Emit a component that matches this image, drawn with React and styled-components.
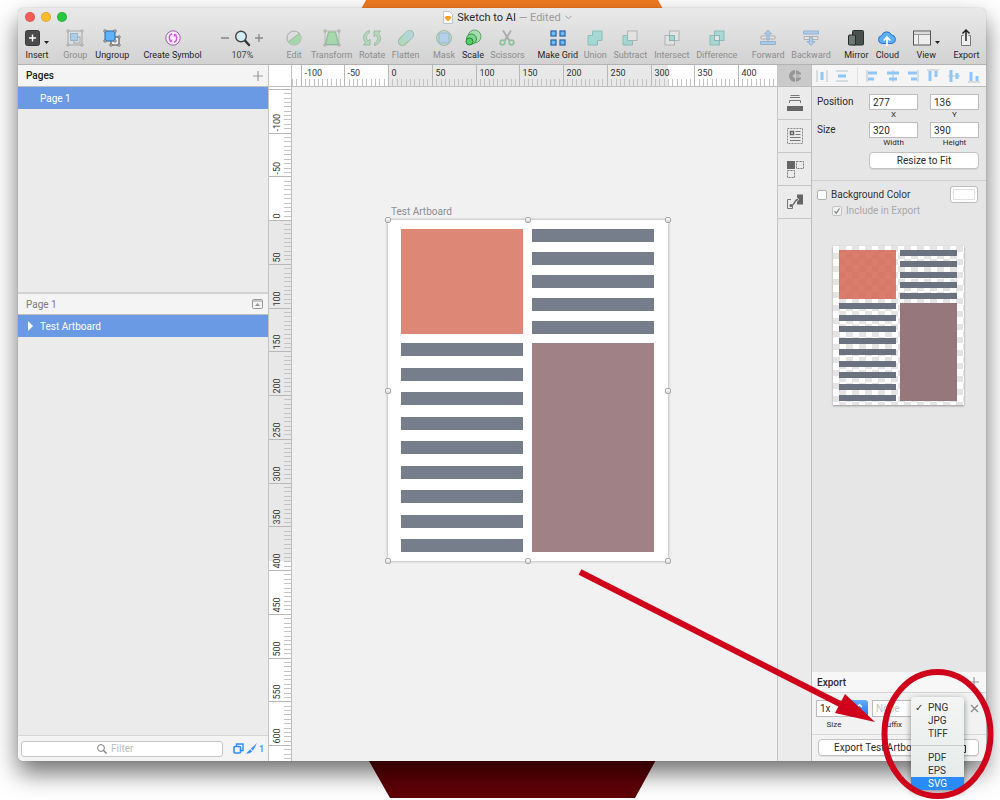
import React, { useLayoutEffect, useRef, useState } from 'react';
import styled, { createGlobalStyle, css } from 'styled-components';

const GlobalStyle = createGlobalStyle`
  * { box-sizing: border-box; }
  body { margin: 0; background: #fff; font-family: Roboto, "Liberation Sans", sans-serif; font-size: 10px; color: #2b2b2b; }
  button, input, select { font: inherit; color: inherit; margin: 0; }
  svg { display: block; flex: none; }
`;

/* ---------- desktop ---------- */

const Desktop = styled.div`
  position: relative;
  display: flex;
  flex-direction: column;
  min-height: 100vh;
  padding: 8px 14px 39px 18px;
  overflow: hidden;
`;

const WallpaperTop = styled.svg`
  position: absolute;
  top: 0;
  left: 0;
  width: 100%;
  height: 40px;
`;

const WallpaperBottom = styled.svg`
  position: absolute;
  bottom: 2px;
  left: 0;
  width: 100%;
  height: 60px;
`;

const Annotation = styled.svg`
  position: absolute;
  right: 0;
  bottom: 0;
  z-index: 5;
  pointer-events: none;
`;

const Window = styled.main`
  position: relative;
  flex: 1;
  display: flex;
  flex-direction: column;
  border-radius: 5px;
  background: #ebebeb;
  box-shadow: 0 12px 24px rgba(0, 0, 0, 0.56), 0 0 1px rgba(0, 0, 0, 0.4);
`;

/* ---------- title bar and toolbar ---------- */

const Header = styled.header`
  height: 57px;
  background: linear-gradient(#e9e9e9, #d2d2d2);
  border-bottom: 1px solid #b2b2b2;
  border-radius: 5px 5px 0 0;
`;

const TitleBar = styled.div`
  display: grid;
  grid-template-columns: 1fr auto 1fr;
  align-items: center;
  height: 18px;
  padding-left: 7px;
`;

const Lights = styled.div`
  display: flex;
  gap: 6px;
`;

const Light = styled.button`
  width: 10px;
  height: 10px;
  padding: 0;
  border: 1px solid rgba(0, 0, 0, 0.1);
  border-radius: 50%;
  background: ${(p) => p.$color};
`;

const Title = styled.h1`
  display: flex;
  align-items: center;
  gap: 4px;
  margin: 0;
  padding-left: 4px;
  font-size: 11px;
  font-weight: 400;
  white-space: nowrap;
`;

const Muted = styled.span`
  color: #9b9b9b;
`;

const Toolbar = styled.nav`
  display: flex;
  justify-content: space-between;
  padding: 2px 6px 0 7px;
`;

const ToolGroup = styled.div`
  display: flex;
  gap: ${(p) => (p.$tight ? 6 : 7)}px;
`;

const ToolButton = styled.button`
  display: flex;
  flex-direction: column;
  align-items: center;
  gap: 3px;
  width: ${(p) => p.$w}px;
  padding: 0;
  border: 0;
  background: none;
  font-size: 9px;
  line-height: 10px;
  white-space: nowrap;
  color: #262626;
  &:disabled { color: #8c8c8c; }
  &:disabled svg { opacity: 0.5; }
`;

const IconRow = styled.span`
  display: flex;
  align-items: center;
  justify-content: center;
  gap: 4px;
  height: 19px;
`;

const ZoomTool = styled.div`
  display: flex;
  flex-direction: column;
  align-items: center;
  gap: 3px;
  width: 48px;
  margin: 0 4px 0 3px;
  font-size: 9px;
  line-height: 10px;
  color: #444;
`;

const BareButton = styled.button`
  display: flex;
  padding: 0;
  border: 0;
  background: none;
`;

/* ---------- body ---------- */

const Body = styled.div`
  flex: 1;
  display: flex;
  min-height: 0;
`;

const Sidebar = styled.aside`
  display: flex;
  flex-direction: column;
  width: 251px;
  border-right: 1px solid #c4c4c4;
  border-radius: 0 0 0 5px;
  overflow: hidden;
`;

const PagesPane = styled.section`
  height: 229px;
  border-bottom: 2px solid #d2d2d2;
`;

const LayersPane = styled.section`
  flex: 1;
`;

const PaneHead = styled.h2`
  display: flex;
  align-items: center;
  justify-content: space-between;
  height: ${(p) => p.$h}px;
  margin: 0;
  padding: 0 5px 0 8px;
  background: #f4f4f4;
  border-bottom: 1px solid #bdbdbd;
  font-size: 10px;
  font-weight: ${(p) => (p.$muted ? 400 : 500)};
  color: ${(p) => (p.$muted ? '#7b7b7b' : '#222')};
`;

const SelectedRow = styled.button`
  display: flex;
  align-items: center;
  gap: 7px;
  width: 100%;
  height: 22px;
  padding: 0 0 0 ${(p) => p.$indent}px;
  border: 0;
  background: #6a9ae4;
  color: #fff;
  text-align: left;
`;

const FilterBar = styled.div`
  display: flex;
  align-items: center;
  gap: 10px;
  height: 26px;
  padding: 0 4px 0 3px;
  border-top: 1px solid #d6d6d6;
  background: #f4f4f4;
`;

const FilterField = styled.label`
  flex: 1;
  display: flex;
  align-items: center;
  gap: 4px;
  min-width: 0;
  height: 16px;
  padding-left: 75px;
  border: 1px solid #c6c6c6;
  border-radius: 3px;
  background: #fff;
`;

const FilterInput = styled.input`
  flex: 1;
  width: 0;
  min-width: 0;
  height: 14px;
  padding: 0;
  border: 0;
  outline: 0;
  background: none;
  &::placeholder { color: #bdbdbd; opacity: 1; }
`;

const FilterTools = styled.div`
  flex: none;
  display: flex;
  align-items: center;
  gap: 2px;
  color: #2f8cff;
  font-size: 9px;
  font-weight: 500;
`;

const Stage = styled.section`
  flex: 1;
  display: flex;
  flex-direction: column;
  min-width: 0;
`;

const TopRulerBox = styled.div`
  height: 22px;
  border-bottom: 1px solid #bdbdbd;
  background: #fff;
  overflow: hidden;
`;

const TopRulerScale = styled.svg`
  width: 100%;
  height: 21px;
`;

const StageRow = styled.div`
  flex: 1;
  display: flex;
  min-height: 0;
`;

const LeftRulerBox = styled.div`
  position: relative;
  width: 23px;
  border-right: 1px solid #bdbdbd;
  background: #fff;
  overflow: hidden;
`;

const LeftRulerScale = styled.svg`
  position: absolute;
  inset: 0;
  width: 100%;
  height: 100%;
`;

const Canvas = styled.div`
  position: relative;
  flex: 1;
  background: #f1f1f1;
`;

const ArtboardFrame = styled.figure`
  position: absolute;
  left: 96px;
  top: 133px;
  width: 280px;
  height: 341px;
  margin: 0;
  background: #fff;
  box-shadow: 0 0 0 1px #d2d2d2, 0 0 3px rgba(0, 0, 0, 0.35);
`;

const ArtboardName = styled.figcaption`
  position: absolute;
  left: 3px;
  top: -15px;
  line-height: 14px;
  color: #8d8d8d;
`;

const Handle = styled.i`
  position: absolute;
  left: ${(p) => p.$x};
  top: ${(p) => p.$y};
  width: 6px;
  height: 6px;
  margin: -3px;
  border: 1px solid #a9a9a9;
  border-radius: 2px;
  background: linear-gradient(#fff, #d8d8d8);
`;

/* ---------- the poster, on the canvas and in the preview ---------- */

const Poster = styled.div`
  display: grid;
  grid-template-columns: ${(p) => (p.$small ? '57px 57px' : '122px 122px')};
  gap: ${(p) => (p.$small ? 4 : 9)}px;
  height: 100%;
  padding: ${(p) => (p.$small ? '4px 6px' : '9px 13px')};
`;

const PosterColumn = styled.div`
  display: grid;
  grid-template-rows: ${(p) => (p.$small ? '49px 1fr' : '105px 1fr')};
  gap: ${(p) => (p.$small ? 4 : 9)}px;
`;

const Block = styled.div`
  background: ${(p) => p.$color};
`;

const BarStack = styled.div`
  display: flex;
  flex-direction: column;
  justify-content: space-between;
`;

const Bar = styled.div`
  height: ${(p) => (p.$small ? 6 : 13)}px;
  background: ${(p) => (p.$small ? '#6b7280' : '#767e8b')};
`;

const Preview = styled.div`
  width: 131px;
  height: 159px;
  margin: 27px 0 0 21px;
  background: repeating-conic-gradient(#e4e4e4 0 25%, #fff 0 50%) 0 0 / 13px 13px;
  box-shadow: 0 1px 2px rgba(0, 0, 0, 0.35);
`;

/* ---------- plug-in strip ---------- */

const Strip = styled.nav`
  display: flex;
  flex-direction: column;
  width: 35px;
  border-left: 1px solid #c6c6c6;
  border-right: 1px solid #bdbdbd;
  background: #ebebeb;
`;

const StripHead = styled.button`
  display: flex;
  align-items: center;
  justify-content: center;
  height: 22px;
  padding: 0;
  border: 0;
  border-bottom: 1px solid #bdbdbd;
  background: #cacaca;
`;

const StripButton = styled.button`
  display: flex;
  align-items: center;
  justify-content: center;
  height: 33px;
  padding: 0;
  border: 0;
  border-bottom: 1px solid #c6c6c6;
  background: none;
`;

/* ---------- inspector ---------- */

const Inspector = styled.aside`
  display: flex;
  flex-direction: column;
  width: 174px;
  background: #e6e6e6;
  border-radius: 0 0 5px 0;
`;

const AlignBar = styled.div`
  display: flex;
  align-items: center;
  justify-content: space-between;
  height: 22px;
  padding: 0 6px 0 4px;
  border-bottom: 1px solid #bdbdbd;
  background: #f5f5f5;
`;

const AlignDivider = styled.i`
  width: 1px;
  height: 18px;
  background: #e0e0e0;
`;

const Geometry = styled.div`
  display: grid;
  grid-template-columns: 1fr 49px 49px;
  gap: 3px 12px;
  padding: 7px 7px 11px 5px;
  border-bottom: 1px solid #cfcfcf;
`;

const GeometryName = styled.span`
  line-height: 16px;
`;

const Field = styled.label`
  display: flex;
  flex-direction: column;
  align-items: center;
  font-size: 8px;
  line-height: 9px;
`;

const inputBox = css`
  height: 16px;
  border: 1px solid #bdbdbd;
  border-radius: 0;
  background: #fff;
  font-size: 10px;
  outline: 0;
`;

const FieldInput = styled.input`
  ${inputBox}
  width: 100%;
  padding: 0 3px;
`;

const PushButton = styled.button`
  height: 17px;
  padding: 0;
  border: 1px solid #c2c2c2;
  border-radius: 4px;
  background: #fff;
  box-shadow: 0 1px 0 rgba(0, 0, 0, 0.08);
`;

const ResizeButton = styled(PushButton)`
  grid-column: 2 / 4;
  margin-top: 2px;
`;

const Options = styled.div`
  padding: 5px 8px 1px 5px;
`;

const OptionRow = styled.div`
  display: flex;
  align-items: center;
  justify-content: space-between;
  height: ${(p) => p.$h}px;
  padding-left: ${(p) => p.$indent || 0}px;
`;

const Check = styled.label`
  display: flex;
  align-items: center;
  gap: 4px;
  color: ${(p) => (p.$off ? '#a8a8a8' : '#333')};
`;

const CheckInput = styled.input`
  appearance: none;
  width: 10px;
  height: 10px;
  border: 1px solid #b0b0b0;
  border-radius: 2px;
  background: #fff;
  &:checked {
    border-color: #c4c4c4;
    background: #f0f0f0 url("data:image/svg+xml,%3Csvg xmlns='http://www.w3.org/2000/svg' viewBox='0 0 8 8'%3E%3Cpath d='M1.5 4.2 3.3 6.2 6.5 1.5' fill='none' stroke='%23888' stroke-width='1.3'/%3E%3C/svg%3E") center / 8px 8px no-repeat;
  }
`;

const Swatch = styled.button`
  width: 28px;
  height: 17px;
  padding: 0;
  border: 1px solid #bdbdbd;
  border-radius: 3px;
  background: #fff;
  box-shadow: inset 0 0 0 2px #fff, inset 0 0 0 3px #e2e2e2;
`;

const ExportPane = styled.section`
  margin-top: auto;
  background: #f2f2f2;
  border-radius: 0 0 5px 0;
`;

const ExportHead = styled.h2`
  display: flex;
  align-items: center;
  justify-content: space-between;
  height: 21px;
  margin: 0;
  padding: 0 7px 0 5px;
  border-bottom: 1px solid #d4d4d4;
  background: #f7f7f7;
  font-size: 10px;
  font-weight: 500;
`;

const ExportRow = styled.div`
  display: grid;
  grid-template-columns: 52px 40px 46px 1fr;
  gap: 4px;
  align-items: start;
  height: 42px;
  padding: 7px 5px 0 4px;
  border-bottom: 1px solid #d8d8d8;
`;

const ExportField = styled.div`
  position: relative;
  display: flex;
  flex-direction: column;
  gap: 3px;
`;

const FieldName = styled.label`
  padding-right: ${(p) => p.$cap || 0}px;
  font-size: 8px;
  line-height: 9px;
  text-align: center;
`;

const SelectShell = styled.span`
  display: flex;
  height: 17px;
`;

const ExportSelect = styled.select`
  ${inputBox}
  appearance: none;
  flex: 1;
  min-width: 0;
  height: 17px;
  padding: 0 3px;
`;

const SelectCap = styled.span`
  display: flex;
  align-items: center;
  justify-content: center;
  width: 17px;
  border-radius: 0 3px 3px 0;
  background: linear-gradient(#62adfb, #1a6ff0);
`;

const SuffixInput = styled.input`
  ${inputBox}
  width: 100%;
  height: 17px;
  padding: 0 3px;
  &::placeholder { color: #c4c4c4; opacity: 1; }
`;

const ExportActions = styled.div`
  position: relative;
  display: flex;
  height: 26px;
  padding: 4px 7px 5px 6px;
`;

const ExportButton = styled(PushButton)`
  flex: 1;
  display: flex;
  align-items: center;
  justify-content: space-between;
  padding: 0 11px 0 15px;
`;

const RemoveButton = styled(BareButton)`
  justify-content: flex-end;
`;

const Menu = styled.div`
  position: absolute;
  z-index: 2;
  top: -3px;
  left: -5px;
  display: flex;
  flex-direction: column;
  width: 53px;
  height: 93px;
  padding: 4px 0 0;
  border-radius: 4px;
  background: linear-gradient(#f3f5f4, #e4eae9);
  box-shadow: 0 2px 6px rgba(0, 0, 0, 0.45);
`;

const MenuItem = styled.button`
  display: flex;
  align-items: center;
  gap: 5px;
  height: 13px;
  padding: 0 0 0 4px;
  border: 0;
  background: ${(p) => (p.$active ? '#2a8bfb' : 'none')};
  color: ${(p) => (p.$active ? '#fff' : '#333')};
  font-size: 10px;
  line-height: 13px;
  text-align: left;
`;

const Tick = styled.span`
  width: 8px;
  font-family: "DejaVu Sans", sans-serif;
  font-size: 10px;
  font-weight: 700;
`;

const MenuRule = styled.hr`
  width: 100%;
  margin: 5px 0;
  border: 0;
  border-top: 1px solid #c9cdcc;
`;

/* ---------- icons ---------- */

const Svg = ({ w = 18, h = 18, children, ...rest }) => (
  <svg width={w} height={h} viewBox={`0 0 ${w} ${h}`} fill="none" aria-hidden="true" {...rest}>
    {children}
  </svg>
);

const Caret = () => (
  <svg width="5" height="16" viewBox="0 0 5 16" aria-hidden="true">
    <path d="M0 11h5L2.500 14z" fill="#222" />
  </svg>
);

const Corners = ({ x, y, s }) => (
  <g fill="#eee" stroke="#555" strokeWidth=".8">
    {[[0, 0], [1, 0], [0, 1], [1, 1]].map(([a, b]) => (
      <circle key={`${a}${b}`} cx={x + a * s} cy={y + b * s} r="1.2" />
    ))}
  </g>
);

const icons = {
  Insert: (
    <>
      <Svg w={15} h={16}>
        <rect x=".5" y=".5" width="14" height="15" rx="2" fill="#4c4c4c" stroke="#3a3a3a" />
        <path d="M7.500 4.500v7M4 8h7" stroke="#fff" strokeWidth="1.400" />
      </Svg>
      <Caret />
    </>
  ),
  Group: (
    <Svg>
      <rect x="2" y="2" width="14" height="14" stroke="#777" />
      <rect x="8" y="8" width="6" height="6" fill="#ddd" stroke="#777" />
      <rect x="4.500" y="4.500" width="7" height="7" fill="#79bdf0" stroke="#4a90c8" />
      <Corners x={2} y={2} s={14} />
    </Svg>
  ),
  Ungroup: (
    <Svg>
      <rect x="8" y="8" width="8" height="8" fill="#eee" stroke="#444" />
      <Corners x={8} y={8} s={8} />
      <rect x="2" y="2" width="10" height="10" fill="#5fb2fa" stroke="#2468a8" />
      <Corners x={2} y={2} s={10} />
    </Svg>
  ),
  'Create Symbol': (
    <Svg>
      <circle cx="9" cy="9" r="7.200" fill="#f8eefa" stroke="#a05cb0" />
      <path d="M8 4.800C5 5.500 4.500 9.500 6.500 12M10 13.200c3-.7 3.500-4.700 1.500-7.200" stroke="#d455e8" strokeWidth="1.500" />
      <path d="M5 13h3.200V10zM13 5H9.800v3z" fill="#d455e8" />
    </Svg>
  ),
  Edit: (
    <Svg>
      <circle cx="9" cy="9" r="7" fill="#ddd" stroke="#777" />
      <path d="M14.500 4.500A7 7 0 1 1 3 13z" fill="#72d27d" />
      <path d="M3 13 15 4" stroke="#4b9a58" />
    </Svg>
  ),
  Transform: (
    <Svg>
      <path d="M2 2h14v14H2z" stroke="#999" />
      <path d="M5.500 3h7L15.500 15.500h-13z" fill="#72d27d" stroke="#3f9a50" strokeWidth="1.200" />
      <Corners x={2} y={2} s={14} />
    </Svg>
  ),
  Rotate: (
    <Svg w={20}>
      <path d="M7.500 1.500C1 3 0 10 3.500 13.500L1.500 16H8V10L6 12C3.500 9.500 4 5.500 7.500 4zM12.500 16.500c6.500-1.500 7.500-8.500 4-12L18.500 2H12v6l2-2c2.500 2.500 2 6.500-1.500 8z" fill="#86d996" stroke="#5f8f68" strokeWidth=".9" />
    </Svg>
  ),
  Flatten: (
    <Svg>
      <rect x="0" y="5" width="18" height="8" rx="4" transform="rotate(-45 9 9)" fill="#8ad8a0" stroke="#4a9a6a" />
      <path d="M5.500 6.500 9 3a4 4 0 0 1 6 6L12 12z" fill="#8fcbe8" opacity=".7" />
    </Svg>
  ),
  Mask: (
    <Svg>
      <circle cx="9" cy="9" r="7.500" fill="#9ddba8" stroke="#6a9a75" />
      <rect x="4" y="4" width="10" height="10" rx="1" fill="#8cc4f5" stroke="#5b8fc0" />
    </Svg>
  ),
  Scale: (
    <Svg>
      <circle cx="10.500" cy="7.500" r="6.500" fill="#a9dcae" stroke="#62a56a" />
      <circle cx="7.500" cy="10" r="5" fill="#7fd48a" stroke="#379746" />
      <circle cx="5.500" cy="12.500" r="3.500" fill="#55cf66" stroke="#1d8a30" />
    </Svg>
  ),
  Scissors: (
    <Svg>
      <path d="M5 1.500 11.500 12M13 1.500 6.500 12" stroke="#777" strokeWidth="1.800" />
      <circle cx="4.500" cy="13.500" r="2.300" stroke="#4cab5c" strokeWidth="1.800" />
      <circle cx="13.500" cy="13.500" r="2.300" stroke="#4cab5c" strokeWidth="1.800" />
    </Svg>
  ),
  'Make Grid': (
    <Svg w={16} h={16}>
      {[[1, 1], [10, 1], [1, 10], [10, 10]].map(([x, y]) => (
        <rect key={`${x}-${y}`} x={x} y={y} width="5" height="5" fill="#6cbcfc" stroke="#2a5fa8" strokeWidth="1.200" />
      ))}
    </Svg>
  ),
  Union: (
    <Svg w={16} h={16}>
      <path d="M5.500 1h9.500v9.500h-4.500V15H1V5.500h4.500z" fill="#6fd4cc" stroke="#3f9f9a" />
    </Svg>
  ),
  Subtract: (
    <Svg w={16} h={16}>
      <rect x="5.500" y="1" width="9.500" height="9.500" fill="#e8e8e8" stroke="#888" />
      <path d="M1 5.500h4.500v5h5V15H1z" fill="#6fd4cc" stroke="#3f9f9a" />
    </Svg>
  ),
  Intersect: (
    <Svg w={16} h={16}>
      <rect x="5.500" y="1" width="9.500" height="9.500" fill="#e8e8e8" stroke="#888" />
      <rect x="1" y="5.500" width="9.500" height="9.500" fill="#e8e8e8" stroke="#888" />
      <rect x="5.500" y="5.500" width="5" height="5" fill="#6fd4cc" stroke="#2f8f8a" />
    </Svg>
  ),
  Difference: (
    <Svg w={16} h={16}>
      <rect x="5.500" y="1" width="9.500" height="9.500" fill="#6fd4cc" stroke="#3f9f9a" />
      <rect x="1" y="5.500" width="9.500" height="9.500" fill="#6fd4cc" stroke="#3f9f9a" />
      <rect x="5.500" y="5.500" width="5" height="5" fill="#eee" stroke="#2f8f8a" />
    </Svg>
  ),
  Forward: (
    <Svg>
      <path d="M2 7h14v3H2z" fill="#e8e8e8" stroke="#888" />
      <path d="M1.500 12.500h15v3h-15z" fill="#7cbcf5" stroke="#4a88c8" />
      <path d="M9 1 5.500 5H8v6h2V5h2.500z" fill="#7cbcf5" stroke="#4a88c8" />
    </Svg>
  ),
  Backward: (
    <Svg>
      <path d="M1.500 2h15v3h-15z" fill="#7cbcf5" stroke="#4a88c8" />
      <path d="M2 7.500h14v3H2z" fill="#e8e8e8" stroke="#888" />
      <path d="M9 16.500 5 12.500h2.500V8h3v4.500H13z" fill="#7cbcf5" stroke="#4a88c8" />
    </Svg>
  ),
  Mirror: (
    <Svg>
      <rect x="5.500" y="1.500" width="11" height="14.500" rx="1" fill="#47514d" stroke="#2b302e" />
      <rect x="1.500" y="6" width="7" height="10" rx="1" fill="#6d7a75" stroke="#242827" />
    </Svg>
  ),
  Cloud: (
    <Svg w={20}>
      <path d="M5 14.500a4 4 0 0 1-.3-7.900A5.200 5.200 0 0 1 14.500 6 4.300 4.300 0 0 1 15 14.500z" fill="#5aaefa" stroke="#2a76c8" />
      <path d="M10 17V9M6.800 11.500 10 8l3.200 3.500" stroke="#fff" strokeWidth="1.800" />
    </Svg>
  ),
  View: (
    <>
      <Svg>
        <rect x=".5" y="2" width="17" height="14" fill="#eee" stroke="#555" />
        <path d="M1 5.500h16M5.500 6v9.500" stroke="#999" />
        <path d="M1 4h16" stroke="#c8c8c8" />
      </Svg>
      <Caret />
    </>
  ),
  Export: (
    <Svg>
      <path d="M6.500 6.500H4.500V16.500h9V6.500h-2" fill="#eee" stroke="#777" />
      <path d="M9 12V1M5.500 4.500 9 1l3.500 3.500" stroke="#222" strokeWidth="1.500" />
    </Svg>
  ),
};

const PlusIcon = () => (
  <Svg w={10} h={10}><path d="M5 0v10M0 5h10" stroke="#999" strokeWidth="1.200" /></Svg>
);

const ArrowsIcon = () => (
  <Svg w={7} h={11}><path d="M1 4 3.500 1.500 6 4M1 7l2.500 2.500L6 7" stroke="#fff" strokeWidth="1.300" /></Svg>
);

const alignIcons = [
  ['Distribute horizontally', 'M1 1v12M11 1v12', 'M6 3v8'],
  ['Distribute vertically', 'M0 2h12M0 12h12', 'M2 7h8'],
  ['Align left', 'M1 1v12', 'M2 4h9M2 10h6'],
  ['Align centre', 'M6 1v12', 'M0 4h12M2 10h8'],
  ['Align right', 'M11 1v12', 'M1 4h9M4 10h6'],
  ['Align top', 'M0 1h12', 'M3 2v10M9 2v6'],
  ['Align middle', 'M0 7h12', 'M3 1v12M9 4v6'],
  ['Align bottom', 'M0 13h12', 'M3 3v9M9 7v5'],
];

/* ---------- toolbar data: label, column width, enabled ---------- */

const toolGroupsLeft = [
  [['Insert', 24, true]],
  [['Group', 25, false], ['Ungroup', 35, true]],
  [['Create Symbol', 58, true]],
];

const toolGroupsRight = [
  [['Edit', 20, false], ['Transform', 41, false], ['Rotate', 26, false], ['Flatten', 27, false]],
  [['Mask', 22, false], ['Scale', 22, true], ['Scissors', 33, false]],
  [['Make Grid', 40, true], ['Union', 23, false], ['Subtract', 35, false], ['Intersect', 36, false], ['Difference', 42, false]],
  [['Forward', 33, false], ['Backward', 39, false]],
  [['Mirror', 24, true], ['Cloud', 24, true]],
  [['View', 26, true]],
  [['Export', 27, true]],
];

const Tools = ({ groups }) =>
  groups.map((group) => (
    <ToolGroup key={group[0][0]} $tight={group.length > 4}>
      {group.map(([label, w, on]) => (
        <ToolButton key={label} type="button" $w={w} disabled={!on}>
          <IconRow>{icons[label]}</IconRow>
          {label}
        </ToolButton>
      ))}
    </ToolGroup>
  ));

/* ---------- rulers ---------- */

const UNIT = 0.875;
const steps = Array.from({ length: 800 }, (_, i) => (i - 40) * 5);

const useBoxSize = () => {
  const ref = useRef(null);
  const [size, setSize] = useState({ width: 0, height: 0 });
  useLayoutEffect(() => {
    const measure = () => setSize({ width: ref.current.clientWidth, height: ref.current.clientHeight });
    measure();
    window.addEventListener('resize', measure);
    return () => window.removeEventListener('resize', measure);
  }, []);
  return [ref, size];
};

const RulerTop = () => {
  const [ref, { width }] = useBoxSize();
  const origin = 119;
  const at = (v) => Math.round(origin + v * UNIT) + 0.5;
  const shown = steps.filter((v) => at(v) > 23 && at(v) < width);
  return (
    <TopRulerBox ref={ref}>
      <TopRulerScale role="img" aria-label="Horizontal ruler">
        <rect x={origin} y="0" width="280" height="21" fill="#e8e8e8" />
        <path d="M22.500 0V21" stroke="#c0c0c0" />
        {shown.map((v) => (
          <path key={v} d={`M${at(v)} ${v % 50 ? 14 : 0}V21`} stroke={v % 50 ? '#c4c4c4' : '#b8b8b8'} />
        ))}
        {shown.filter((v) => v % 50 === 0 && at(v) + 22 < width).map((v) => (
          <text key={v} x={at(v) + 3} y="11" fontSize="9" fill="#333">{v}</text>
        ))}
      </TopRulerScale>
    </TopRulerBox>
  );
};

const RulerLeft = () => {
  const [ref, { height }] = useBoxSize();
  const origin = 133;
  const at = (v) => Math.round(origin + v * UNIT) + 0.5;
  const shown = steps.filter((v) => at(v) > 0 && at(v) < height);
  return (
    <LeftRulerBox ref={ref}>
      <LeftRulerScale role="img" aria-label="Vertical ruler">
        <rect x="0" y={origin} width="22" height="341" fill="#e8e8e8" />
        {shown.map((v) => (
          <path key={v} d={`M${v % 50 ? 15 : 0} ${at(v)}H22`} stroke={v % 50 ? '#c4c4c4' : '#b8b8b8'} />
        ))}
        {shown.filter((v) => v % 50 === 0 && at(v) > 20).map((v) => (
          <text key={v} transform={`translate(11 ${at(v) - 2}) rotate(-90)`} fontSize="9" fill="#333">{v}</text>
        ))}
      </LeftRulerScale>
    </LeftRulerBox>
  );
};

/* ---------- poster ---------- */

const Bars = ({ count, small }) => (
  <BarStack>
    {Array.from({ length: count }, (_, i) => <Bar key={i} $small={small} />)}
  </BarStack>
);

const PosterArt = ({ small }) => (
  <Poster $small={small}>
    <PosterColumn $small={small}>
      <Block $color={small ? 'rgba(213, 104, 84, 0.86)' : '#dd8877'} />
      <Bars count={9} small={small} />
    </PosterColumn>
    <PosterColumn $small={small}>
      <Bars count={5} small={small} />
      <Block $color={small ? '#96777c' : '#a08185'} />
    </PosterColumn>
  </Poster>
);

const handles = [
  ['0%', '0%'], ['50%', '0%'], ['100%', '0%'], ['0%', '50%'],
  ['100%', '50%'], ['0%', '100%'], ['50%', '100%'], ['100%', '100%'],
];

const formats = ['PNG', 'JPG', 'TIFF', null, 'PDF', 'EPS', 'SVG'];

const stripIcons = [
  ['Layers', (
    <Svg w={18} h={18}>
      <path d="M4.500 1.500h9M4 3.500h10M3.500 9V6.500h11V9" stroke="#777" />
      <rect x="1" y="12" width="16" height="5" fill="#666" />
    </Svg>
  )],
  ['Text styles', (
    <Svg w={18} h={18}>
      <rect x="1.500" y="1.500" width="15" height="15" stroke="#888" strokeDasharray="2 1" />
      <rect x="4.500" y="4.500" width="3" height="3" stroke="#666" strokeWidth="1.500" />
      <path d="M9.500 4.500h5M9.500 7.500h5M4 10.500h10.500M4 13.500h10.500" stroke="#777" />
    </Svg>
  )],
  ['Grid', (
    <Svg w={18} h={18}>
      <rect x="1" y="1" width="8" height="8" fill="#666" />
      <rect x="10.500" y="1.500" width="7" height="7" stroke="#777" strokeDasharray="2 1" />
      <rect x="1.500" y="10.500" width="7" height="7" stroke="#777" strokeDasharray="2 1" />
    </Svg>
  )],
  ['Connect', (
    <Svg w={18} h={18}>
      <path d="M5 6.500H1.500v9h5V13" stroke="#777" />
      <path d="M11 1.500h6v10h-6V9l2-2.500-2-2z" fill="#666" />
      <path d="M5 12.500c4 .5 3-6 7-6" stroke="#666" strokeWidth="1.300" />
      <circle cx="5" cy="12.500" r="1.500" fill="#666" />
    </Svg>
  )],
];

const NumberField = ({ name, value }) => (
  <Field>
    <FieldInput type="text" defaultValue={value} />
    {name}
  </Field>
);

export default function App() {
  return (
    <>
      <GlobalStyle />
      <Desktop>
        <WallpaperTop aria-hidden="true">
          <svg x="50%" overflow="visible"><path d="M-134 0H158L180 40H-156z" fill="#f27b21" /></svg>
        </WallpaperTop>
        <WallpaperBottom aria-hidden="true">
          <svg x="50%" overflow="visible"><path d="M-144 0H168L135 60H-110z" fill="#5e0006" /></svg>
        </WallpaperBottom>

        <Window>
          <Header>
            <TitleBar>
              <Lights>
                <Light type="button" aria-label="Close" $color="#fc5b57" />
                <Light type="button" aria-label="Minimise" $color="#fdbb2f" />
                <Light type="button" aria-label="Zoom window" $color="#29c740" />
              </Lights>
              <Title>
                <Svg w={10} h={13}>
                  <path d="M.5.5h6l3 3v9h-9z" fill="#fff" stroke="#c4c4c4" />
                  <path d="M3 5h4l1.500 1.800L5 10.500 1.500 6.800z" fill="#f8a124" />
                </Svg>
                <span>Sketch to AI <Muted>— Edited</Muted></span>
                <Svg w={7} h={5}><path d="m.5.8 3 3 3-3" stroke="#999" /></Svg>
              </Title>
            </TitleBar>
            <Toolbar>
              <Tools groups={toolGroupsLeft} />
              <ZoomTool>
                <IconRow>
                  <BareButton type="button" aria-label="Zoom out">
                    <Svg w={8} h={8}><path d="M0 4h8" stroke="#777" strokeWidth="1.300" /></Svg>
                  </BareButton>
                  <Svg w={18}>
                    <path d="m11.500 11 4.500 5" stroke="#333" strokeWidth="2.400" strokeLinecap="round" />
                    <circle cx="8" cy="7.500" r="5.300" fill="#d5edf5" stroke="#444" strokeWidth="1.400" />
                  </Svg>
                  <BareButton type="button" aria-label="Zoom in">
                    <Svg w={8} h={8}><path d="M0 4h8M4 0v8" stroke="#888" strokeWidth="1.300" /></Svg>
                  </BareButton>
                </IconRow>
                107%
              </ZoomTool>
              <Tools groups={toolGroupsRight} />
            </Toolbar>
          </Header>

          <Body>
            <Sidebar>
              <PagesPane>
                <PaneHead $h={22}>
                  Pages
                  <BareButton type="button" aria-label="Add page"><PlusIcon /></BareButton>
                </PaneHead>
                <SelectedRow type="button" $indent={22}>Page 1</SelectedRow>
              </PagesPane>
              <LayersPane>
                <PaneHead $h={21} $muted>
                  Page 1
                  <BareButton type="button" aria-label="Collapse">
                    <Svg w={11} h={10}>
                      <rect x=".5" y=".5" width="10" height="9" rx="1" stroke="#999" />
                      <path d="M1 2h9" stroke="#999" />
                      <path d="M3 7h5L5.500 4z" fill="#999" />
                    </Svg>
                  </BareButton>
                </PaneHead>
                <SelectedRow type="button" $indent={10}>
                  <Svg w={5} h={10}><path d="M0 0v10l5-5z" fill="#fff" /></Svg>
                  Test Artboard
                </SelectedRow>
              </LayersPane>
              <FilterBar>
                <FilterField>
                  <Svg w={10} h={10}>
                    <circle cx="4" cy="4" r="3.400" stroke="#777" />
                    <path d="m6.500 6.500 3 3" stroke="#777" strokeWidth="1.200" />
                  </Svg>
                  <FilterInput type="text" placeholder="Filter" aria-label="Filter layers" />
                </FilterField>
                <FilterTools>
                  <Svg w={11} h={11}>
                    <path d="M3.500 3V1H10v6.500H8" stroke="#2f8cff" strokeWidth="1.400" />
                    <rect x="1" y="3.500" width="6.500" height="6.500" rx="1" stroke="#2f8cff" strokeWidth="1.600" />
                  </Svg>
                  <Svg w={11} h={11}>
                    <path d="M11 0 7 7.500 4.800 5.800zM4 6.500l2.200 1.800C4.500 10.500 2.500 10.500 0 10.500 2 9.500 2.500 7.500 4 6.500z" fill="#2f8cff" />
                  </Svg>
                  1
                </FilterTools>
              </FilterBar>
            </Sidebar>

            <Stage>
              <RulerTop />
              <StageRow>
                <RulerLeft />
                <Canvas>
                  <ArtboardFrame>
                    <ArtboardName>Test Artboard</ArtboardName>
                    <PosterArt />
                    {handles.map(([x, y]) => <Handle key={x + y} $x={x} $y={y} />)}
                  </ArtboardFrame>
                </Canvas>
              </StageRow>
            </Stage>

            <Strip>
              <StripHead type="button" aria-label="Craft">
                <Svg w={14} h={14}>
                  <path d="M7 1a6 6 0 1 0 0 12V9.500L4.500 7 7 4.500z" fill="#979797" />
                  <path d="M8 1.500h1.500L13 4v1.500H8zM8 12.500h1.500L13 10V8.500H8z" fill="#979797" />
                  <path d="M8 5.500h3v3H8z" fill="#b2b2b2" />
                </Svg>
              </StripHead>
              {stripIcons.map(([name, icon]) => (
                <StripButton key={name} type="button" aria-label={name}>{icon}</StripButton>
              ))}
            </Strip>

            <Inspector>
              <AlignBar>
                {alignIcons.map(([name, line, bars], i) => (
                  <React.Fragment key={name}>
                    {i === 2 && <AlignDivider />}
                    <BareButton type="button" aria-label={name}>
                      <Svg w={12} h={14}>
                        <path d={line} stroke="#b9c3cc" />
                        <path d={bars} stroke="#8ec5fb" strokeWidth="3" />
                      </Svg>
                    </BareButton>
                  </React.Fragment>
                ))}
              </AlignBar>
              <Geometry>
                <GeometryName>Position</GeometryName>
                <NumberField name="X" value="277" />
                <NumberField name="Y" value="136" />
                <GeometryName>Size</GeometryName>
                <NumberField name="Width" value="320" />
                <NumberField name="Height" value="390" />
                <ResizeButton type="button">Resize to Fit</ResizeButton>
              </Geometry>
              <Options>
                <OptionRow $h={17}>
                  <Check><CheckInput type="checkbox" />Background Color</Check>
                  <Swatch type="button" aria-label="Background colour" />
                </OptionRow>
                <OptionRow $h={15} $indent={15}>
                  <Check $off><CheckInput type="checkbox" defaultChecked disabled />Include in Export</Check>
                </OptionRow>
              </Options>
              <Preview><PosterArt small /></Preview>

              <ExportPane>
                <ExportHead>
                  Export
                  <BareButton type="button" aria-label="Add export"><PlusIcon /></BareButton>
                </ExportHead>
                <ExportRow>
                  <ExportField>
                    <SelectShell>
                      <ExportSelect id="size" defaultValue="1x"><option>1x</option><option>2x</option></ExportSelect>
                      <SelectCap><ArrowsIcon /></SelectCap>
                    </SelectShell>
                    <FieldName htmlFor="size" $cap={16}>Size</FieldName>
                  </ExportField>
                  <ExportField>
                    <SuffixInput id="suffix" placeholder="None" />
                    <FieldName htmlFor="suffix">Suffix</FieldName>
                  </ExportField>
                  <ExportField>
                    <SelectShell>
                      <ExportSelect aria-label="Format" defaultValue="PNG">
                        {formats.filter(Boolean).map((f) => <option key={f}>{f}</option>)}
                      </ExportSelect>
                      <SelectCap><ArrowsIcon /></SelectCap>
                    </SelectShell>
                    <Menu role="menu">
                      {formats.map((f) => (f ? (
                        <MenuItem key={f} type="button" role="menuitem" $active={f === 'SVG'}>
                          <Tick>{f === 'PNG' ? '✓' : ''}</Tick>{f}
                        </MenuItem>
                      ) : <MenuRule key="rule" />))}
                    </Menu>
                  </ExportField>
                  <RemoveButton type="button" aria-label="Remove export">
                    <Svg w={12} h={17}><path d="m2 5 7 7M9 5l-7 7" stroke="#888" strokeWidth="1.300" /></Svg>
                  </RemoveButton>
                </ExportRow>
                <ExportActions>
                  <ExportButton type="button">
                    Export Test Artboard
                    <Svg w={8} h={11}><path d="M2 3.500H.5v7h6v-7H5" stroke="#333" /></Svg>
                  </ExportButton>
                </ExportActions>
              </ExportPane>
            </Inspector>
          </Body>
        </Window>

        <Annotation width="440" height="240" viewBox="0 0 440 240" aria-hidden="true">
          <path d="M20 12 284 146" stroke="#d0021b" strokeWidth="6" />
          <path d="M315 162 285 134 275 153z" fill="#d0021b" />
          <ellipse cx="377.500" cy="174" rx="53" ry="62" fill="none" stroke="#d0021b" strokeWidth="6" />
        </Annotation>
      </Desktop>
    </>
  );
}
